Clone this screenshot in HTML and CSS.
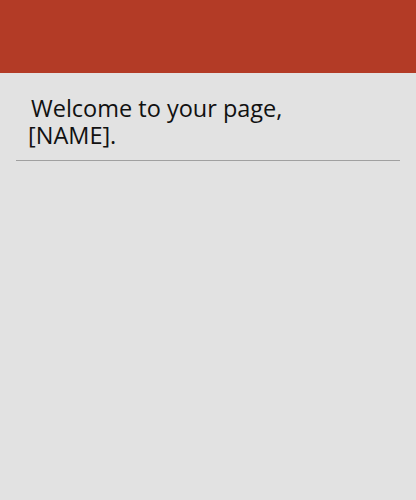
FILE: index.html
```html
<!DOCTYPE html>
<html>
<head>
<meta charset="utf-8">
<link rel="stylesheet" href="styles.css">
</head>
<body>
<header class="topbar"></header>
<main class="content">
  <h1 class="welcome">Welcome to your page, [NAME].</h1>
</main>
</body>
</html>
```
FILE: styles.css
```css
html, body {
  margin: 0;
  padding: 0;
  background: #e2e2e2;
  height: 100%;
}
body {
  font-family: "Open Sans", sans-serif;
  color: #111;
}
.topbar {
  height: 73px;
  background: #b33b26;
}
.content {
  padding: 0 16px;
}
.welcome {
  margin: 0;
  padding: 22px 80px 11px 12px;
  font-size: 23.5px;
  font-weight: 400;
  line-height: 27px;
  text-indent: 3px;
  border-bottom: 1px solid #a0a0a0;
}
```
